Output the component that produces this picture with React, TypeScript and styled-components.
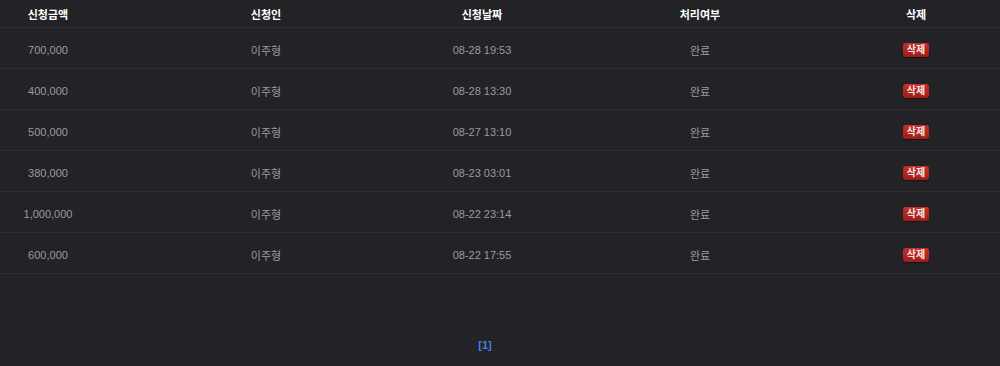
import React from "react";
import styled, { createGlobalStyle } from "styled-components";

const GlobalStyle = createGlobalStyle`
  html, body {
    margin: 0;
    padding: 0;
    background: #222227;
  }
  body {
    font-family: "Liberation Sans", "Noto Sans CJK KR", sans-serif;
    font-size: 11px;
  }
`;

type Request = {
  amount: string;
  name: string;
  date: string;
  status: string;
};

const rows: Request[] = [
  { amount: "700,000", name: "이주형", date: "08-28 19:53", status: "완료" },
  { amount: "400,000", name: "이주형", date: "08-28 13:30", status: "완료" },
  { amount: "500,000", name: "이주형", date: "08-27 13:10", status: "완료" },
  { amount: "380,000", name: "이주형", date: "08-23 03:01", status: "완료" },
  { amount: "1,000,000", name: "이주형", date: "08-22 23:14", status: "완료" },
  { amount: "600,000", name: "이주형", date: "08-22 17:55", status: "완료" },
];

const Wrap = styled.div`
  width: 1000px;
  height: 366px;
  background: #222227;
  overflow: hidden;
`;

const Table = styled.div`
  display: grid;
  grid-template-columns: 96px 340px 92px 344px 88px 1fr;
`;

const Row = styled.div<{ $head?: boolean }>`
  display: contents;

  & > div {
    box-sizing: border-box;
    height: ${({ $head }) => ($head ? "28px" : "41px")};
    padding-top: ${({ $head }) => ($head ? "0" : "3px")};
    border-bottom: 1px solid #2c2c32;
    color: ${({ $head }) => ($head ? "#ffffff" : "#9b9ba0")};
    font-weight: ${({ $head }) => ($head ? 700 : 400)};
  }
`;

const Cell = styled.div`
  display: flex;
  align-items: center;
  justify-content: center;
  white-space: nowrap;
`;

const DeleteBadge = styled.span`
  display: inline-block;
  padding: 1px 4px;
  border-radius: 3px;
  background: linear-gradient(#c7302a, #9e1c18);
  box-shadow: 0 1px 1px rgba(0, 0, 0, 0.4);
  color: #f4e6e6;
  font-size: 10px;
  font-weight: 700;
  line-height: 12px;
`;

const Pagination = styled.div`
  display: flex;
  justify-content: center;
  padding-top: 65px;
  padding-right: 30px;
  color: #3d86e0;
  font-weight: 700;
  font-size: 11px;
`;

export default function App() {
  return (
    <Wrap>
      <GlobalStyle />
      <Table>
        <Row $head>
          <Cell>신청금액</Cell>
          <Cell>신청인</Cell>
          <Cell>신청날짜</Cell>
          <Cell>처리여부</Cell>
          <Cell>삭제</Cell>
          <Cell />
        </Row>
        {rows.map((r, i) => (
          <Row key={i}>
            <Cell>{r.amount}</Cell>
            <Cell>{r.name}</Cell>
            <Cell>{r.date}</Cell>
            <Cell>{r.status}</Cell>
            <Cell>
              <DeleteBadge>삭제</DeleteBadge>
            </Cell>
            <Cell />
          </Row>
        ))}
      </Table>
      <Pagination>[1]</Pagination>
    </Wrap>
  );
}
